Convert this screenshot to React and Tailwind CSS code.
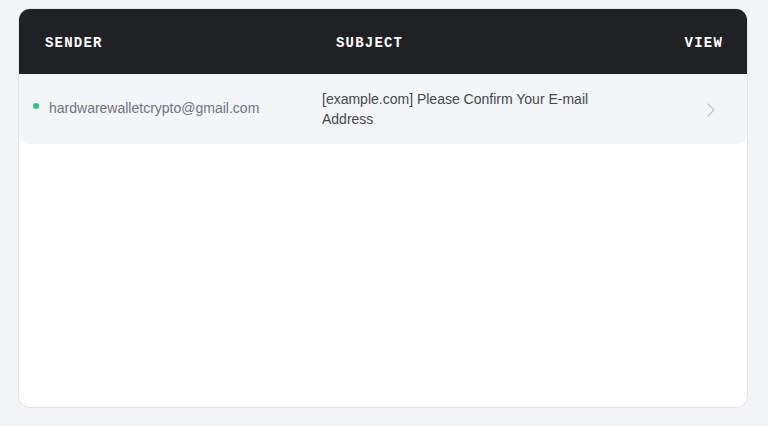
import React from "react";
import { ChevronRight } from "lucide-react";

const messages = [
  {
    sender: "hardwarewalletcrypto@gmail.com",
    subject: "[example.com] Please Confirm Your E-mail Address",
    unread: true,
  },
];

export default function App() {
  return (
    <div
      className="min-h-[426px] w-full bg-[#f3f4f6] pt-[8px] pl-[18px] pr-[20px]"
      style={{ fontFamily: '"Liberation Sans", Arial, sans-serif' }}
    >
      <div className="h-[400px] bg-white border border-[#e3e4ea] rounded-[12px] overflow-hidden">
        <div
          className="flex items-center h-[65px] pt-[3px] bg-[#202125] text-white text-[14px] font-bold tracking-[1.2px] pl-[26px] pr-[24px]"
          style={{ fontFamily: '"Liberation Mono", "Courier New", monospace' }}
        >
          <div className="w-[291px]">SENDER</div>
          <div className="flex-1">SUBJECT</div>
          <div>VIEW</div>
        </div>

        {messages.map((m) => (
          <div
            key={m.sender}
            className="flex items-center h-[70px] bg-[#f4f5f7] rounded-b-[10px] pl-[14px] pr-[24px]"
          >
            <div className="w-[289px] flex items-center gap-[10px] -mt-[1px]">
              <span
                className={`w-[6px] h-[6px] rounded-full mb-[6px] ${
                  m.unread ? "bg-[#2ec28e]" : "bg-transparent"
                }`}
              />
              <span className="text-[14px] text-[#6e7386]">{m.sender}</span>
            </div>
            <div className="w-[300px] text-[14px] leading-[20px] text-[#45474f]">
              {m.subject}
            </div>
            <div className="flex-1 flex justify-end">
              <ChevronRight className="w-[24px] h-[24px] text-[#c4c6cc] -mb-[2px]" strokeWidth={1.2} />
            </div>
          </div>
        ))}
      </div>
    </div>
  );
}
